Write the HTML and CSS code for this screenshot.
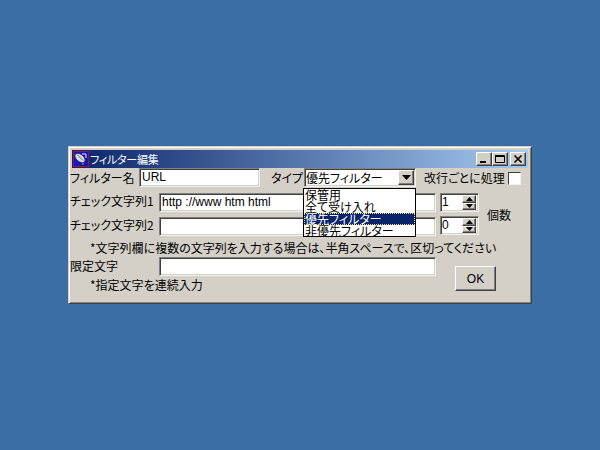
FILE: index.html
```html
<!DOCTYPE html>
<html lang="ja">
<head>
<meta charset="utf-8">
<title>フィルター編集</title>
<link rel="stylesheet" href="styles.css">
</head>
<body>
<div class="window">
  <div class="titlebar">
    <svg class="appicon" width="16" height="16" viewBox="0 0 16 16">
      <rect x="0.5" y="0.5" width="15" height="15" fill="#1414c8" stroke="#a01040"/>
      <path d="M9 9 L12 14 L8 14 Z" fill="#8c8ca0" stroke="#101020" stroke-width="0.8"/>
      <ellipse cx="7" cy="7" rx="6" ry="3.6" transform="rotate(40 7 7)" fill="#d8d8e4" stroke="#202030" stroke-width="0.8"/>
      <path d="M4 3.5 L10 9.5" stroke="#70708c" stroke-width="1"/>
      <path d="M9 3 L13 3 M13 3 L13 7" stroke="#e8e8f0" stroke-width="1"/>
    </svg>
    <span class="title">フィルター編集</span>
    <div class="caption-buttons">
      <span class="capbtn"><svg width="10" height="10" viewBox="0 0 10 10"><rect x="1" y="7" width="6" height="2" fill="#000"/></svg></span>
      <span class="capbtn"><svg width="10" height="10" viewBox="0 0 10 10"><path d="M0.5 1.5H9.5V8.5H0.5Z M0.5 1V2.5H9.5" fill="none" stroke="#000"/></svg></span>
      <span class="capbtn close"><svg width="10" height="10" viewBox="0 0 10 10"><path d="M1.5 1.5L8.5 8.5M8.5 1.5L1.5 8.5" stroke="#000" stroke-width="1.6"/></svg></span>
    </div>
  </div>
  <div class="client">
    <div class="row">
      <span class="label name-label">フィルター名</span>
      <div class="field name-field">URL</div>
      <span class="label type-label">タイプ</span>
      <div class="combo">
        <div class="combo-text">優先フィルター</div>
        <span class="combo-btn"><svg width="9" height="5" viewBox="0 0 9 5"><path d="M0 0H9L4.5 5Z" fill="#000"/></svg></span>
        <ul class="dropdown">
          <li>保管用</li>
          <li>全て受け入れ</li>
          <li class="selected">優先フィルター</li>
          <li>非優先フィルター</li>
        </ul>
      </div>
      <span class="label newline-label">改行ごとに処理</span>
      <span class="checkbox"></span>
    </div>
    <div class="checks">
      <div class="check-rows">
        <div class="row">
          <span class="label check-label">チェック文字列1</span>
          <div class="field check-field">http ://www htm html</div>
          <div class="spin">
            <span class="spin-value">1</span>
            <span class="spin-btns">
              <span class="spin-btn"><svg width="7" height="4" viewBox="0 0 7 4"><path d="M0 4H7L3.5 0Z" fill="#000"/></svg></span>
              <span class="spin-btn"><svg width="7" height="4" viewBox="0 0 7 4"><path d="M0 0H7L3.5 4Z" fill="#000"/></svg></span>
            </span>
          </div>
        </div>
        <div class="row">
          <span class="label check-label">チェック文字列2</span>
          <div class="field check-field"></div>
          <div class="spin spin-two">
            <span class="spin-value">0</span>
            <span class="spin-btns">
              <span class="spin-btn"><svg width="7" height="4" viewBox="0 0 7 4"><path d="M0 4H7L3.5 0Z" fill="#000"/></svg></span>
              <span class="spin-btn"><svg width="7" height="4" viewBox="0 0 7 4"><path d="M0 0H7L3.5 4Z" fill="#000"/></svg></span>
            </span>
          </div>
        </div>
      </div>
      <span class="label count-label">個数</span>
    </div>
    <p class="note note-one">*文字列欄に複数の文字列を入力する場合は、半角スペースで、区切ってください</p>
    <div class="bottom">
      <div class="bottom-left">
        <div class="row">
          <span class="label check-label limit-label">限定文字</span>
          <div class="field check-field"></div>
        </div>
        <p class="note">*指定文字を連続入力</p>
      </div>
      <button class="ok">OK</button>
    </div>
  </div>
</div>
</body>
</html>
```

FILE: styles.css
```css
* { box-sizing: border-box; }
html, body { margin: 0; height: 100%; }
body {
  background: #3a6ea5;
  font-family: "Noto Sans CJK JP", "Liberation Sans", sans-serif;
  font-size: 12px;
  font-feature-settings: "palt";
  color: #000;
  overflow: hidden;
}
.window {
  position: absolute;
  left: 68px;
  top: 146px;
  width: 464px;
  height: 158px;
  background: #d4d0c8;
  border: 1px solid;
  border-color: #d4d0c8 #404040 #404040 #d4d0c8;
  box-shadow: inset 1px 1px #fff, inset -1px -1px #808080;
  padding: 3px;
}
.titlebar {
  display: flex;
  align-items: center;
  height: 18px;
  padding: 0 2px 0 1px;
  color: #fff;
  background: linear-gradient(90deg, #0a246a, #a6caf0);
}
.appicon { flex: none; margin-right: 1px; }
.title { line-height: 18px; font-size: 11px; letter-spacing: -0.25px; }
.caption-buttons { margin-left: auto; display: flex; }
.capbtn, .combo-btn, .spin-btn {
  display: flex;
  align-items: center;
  justify-content: center;
  background: #d4d0c8;
  border: 1px solid;
  border-color: #fff #404040 #404040 #fff;
  box-shadow: inset -1px -1px #808080;
}
.capbtn { width: 16px; height: 14px; }
.capbtn.close { margin-left: 2px; }
.client { margin-left: -2px; }
.row { display: flex; align-items: flex-start; height: 20px; }
.label { white-space: nowrap; line-height: 16px; }
.name-label, .type-label, .newline-label { margin-top: 2px; }
.name-label { width: 69px; }
.field, .combo, .spin {
  height: 19px;
  background: #fff;
  border: 1px solid;
  border-color: #808080 #f4f2ec #f4f2ec #808080;
  box-shadow: inset 1px 1px #404040, inset -1px -1px #d4d0c8;
}
.field {
  padding: 1px 1px 0 2px;
  font-family: "Liberation Sans", "Noto Sans CJK JP", sans-serif;
  line-height: 15px;
  white-space: nowrap;
}
.name-field { width: 121px; }
.type-label { margin-left: 11px; width: 33px; }
.combo {
  position: relative;
  width: 112px;
  display: flex;
  align-items: center;
  padding: 1px;
}
.combo-text { flex: 1; line-height: 15px; }
.combo-btn { width: 16px; height: 15px; }
.dropdown {
  position: absolute;
  left: -2px;
  top: 19px;
  width: 113px;
  height: 49px;
  margin: 0;
  padding: 0;
  list-style: none;
  background: #fff;
  border: 1px solid #000;
  z-index: 2;
}
.dropdown li { height: 12px; line-height: 11px; padding-left: 1px; white-space: nowrap; }
.dropdown .selected { background: #0a246a; color: #fff; outline: 1px dotted #e8e080; outline-offset: -1px; }
.newline-label { margin-left: 8px; width: 84px; }
.checkbox {
  width: 13px;
  height: 13px;
  margin-top: 4px;
  background: #fff;
  border: 1px solid;
  border-color: #404040 #f4f2ec #f4f2ec #404040;
}
.checks { display: flex; align-items: center; margin-top: 5px; }
.check-rows { display: flex; flex-direction: column; gap: 4px; }
.check-label { width: 89px; }
.limit-label { margin-top: 1px; }
.check-field { width: 277px; }
.spin {
  display: flex;
  align-items: center;
  width: 39px;
  margin-left: 4px;
  padding: 1px 2px 1px 1px;
}
.spin-two { margin-top: -1px; }
.spin-value { flex: 1; font-family: "Liberation Sans", sans-serif; line-height: 15px; }
.spin-btns { display: flex; flex-direction: column; width: 14px; height: 15px; }
.spin-btn { flex: 1; }
.count-label { margin-left: 8px; }
.note { margin: 0; padding-left: 20px; line-height: 16px; white-space: nowrap; }
.note-one { margin: 3px 0 1px; }
.bottom { display: flex; align-items: flex-start; }
.bottom-left { width: 385px; }
.ok {
  width: 41px;
  height: 25px;
  margin-top: 9px;
  padding: 0;
  background: #d4d0c8;
  font-family: "Liberation Sans", sans-serif;
  font-size: 12px;
  border: 1px solid;
  border-color: #fff #404040 #404040 #fff;
  box-shadow: inset -1px -1px #808080;
}
```
